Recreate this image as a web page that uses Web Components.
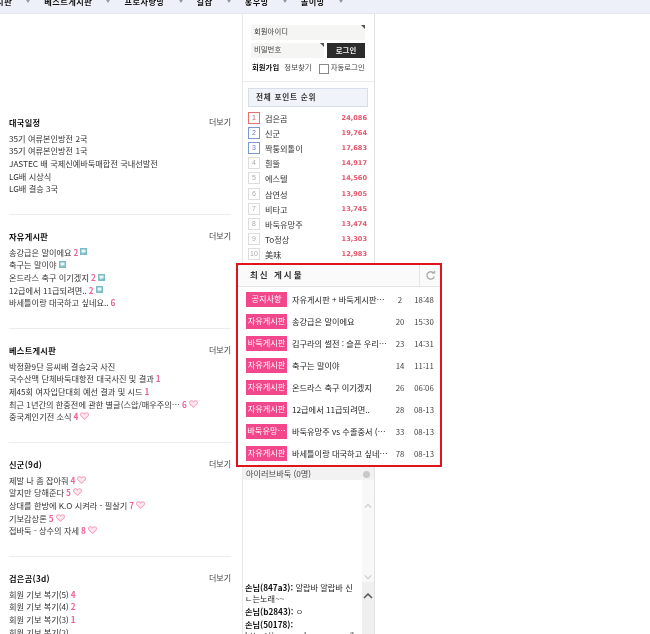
<!DOCTYPE html>
<html lang="ko">
<head>
<meta charset="utf-8">
<title>bbs</title>
<style>
  html, body { margin: 0; padding: 0; background: #fff; }
  body { width: 650px; height: 634px; overflow: hidden; position: relative; font: 8px "Noto Sans CJK KR", "Liberation Sans", sans-serif; color: #222; filter: blur(.25px); }
  .page { display: flex; }
</style>
</head>
<body>
<top-nav></top-nav>
<div class="page">
  <board-column></board-column>
  <side-column>
    <login-box></login-box>
    <rank-box></rank-box>
    <chat-box></chat-box>
  </side-column>
</div>
<latest-popup></latest-popup>

<script>
const FONT = '"Noto Sans CJK KR", "Liberation Sans", sans-serif';

class TopNav extends HTMLElement {
  constructor() {
    super();
    this.attachShadow({ mode: 'open' });
    const items = ['자유게시판', '베스트게시판', '프로사랑방', '길잡', '홍우방', '놀이방'];
    this.shadowRoot.innerHTML = `
      <style>
        :host { display: block; height: 13.5px; background: #edf0f8; border-bottom: 1px solid #e3e6ee; overflow: hidden; box-sizing: border-box; }
        nav { display: flex; margin-left: -28px; margin-top: -5px; }
        a { display: flex; align-items: center; font-size: 8.2px; line-height: 12px; font-weight: 700; color: #111; letter-spacing: .5px; white-space: nowrap; }
        i { display: block; width: 0; height: 0; border: 2px solid transparent; border-top: 3px solid #999; border-bottom: 0; margin: 0 14px; }
      </style>
      <nav>${items.map(i => `<a>${i}<i></i></a>`).join('')}</nav>`;
  }
}

class BoardSection extends HTMLElement {
  constructor() {
    super();
    this.attachShadow({ mode: 'open' });
    this.shadowRoot.innerHTML = `
      <style>
        :host { display: block; height: 114px; box-sizing: border-box; border-bottom: 1px solid #ececec; padding-top: 15px; }
        :host(:last-child) { border-bottom: 0; }
        header { display: flex; justify-content: space-between; align-items: center; height: 12px; margin-bottom: 4px; }
        b { font-size: 8.2px; font-weight: 700; color: #111; letter-spacing: .3px; }
        span { font-size: 8px; color: #444; }
      </style>
      <header><b>${this.getAttribute('title')}</b><span>더보기</span></header>
      <slot></slot>`;
  }
}

class BoardRow extends HTMLElement {
  constructor() {
    super();
    this.attachShadow({ mode: 'open' });
    const n = this.getAttribute('count');
    const icon = this.getAttribute('icon');
    let svg = '';
    if (icon === 'img') {
      svg = '<svg width="7" height="7" viewBox="0 0 7 7"><rect width="7" height="7" fill="#7cbcc4"/><rect x="1.5" y="1.5" width="4" height="3" fill="#e8f6f6"/><path d="M2.5 4.5v1.5l1.5-1.5z" fill="#e8f6f6"/></svg>';
    } else if (icon === 'heart') {
      svg = '<svg width="9" height="8" viewBox="0 0 8 7"><path d="M4 6.400 1 3.600C-.1 2.400.6.700 2.100.7c.9 0 1.500.5 1.900 1.100C4.400 1.200 5 .7 5.900.7c1.500 0 2.200 1.700 1.100 2.900z" fill="#fdeaf0" stroke="#f7a8c0" stroke-width=".9"/></svg>';
    }
    this.shadowRoot.innerHTML = `
      <style>
        :host { display: flex; align-items: center; gap: 2px; height: 12.67px; font-size: 8.2px; color: #333; white-space: nowrap; }
        em { font-style: normal; font-weight: 700; color: #f0609a; }
        svg { display: block; }
      </style>
      <slot></slot>${n ? `<em>${n}</em>` : ''}${svg}`;
  }
}

class BoardColumn extends HTMLElement {
  constructor() {
    super();
    this.attachShadow({ mode: 'open' });
    const boards = [
      ['대국일정', [['35기 여류본인방전 2국'], ['35기 여류본인방전 1국'], ['JASTEC 배 국제신예바둑매합전 국내선발전'], ['LG배 시상식'], ['LG배 결승 3국']]],
      ['자유게시판', [['송강급은 말이에요', 2, 'img'], ['축구는 말이야', '', 'img'], ['온드라스 축구 이기겠지', 2, 'img'], ['12급에서 11급되려면..', 2, 'img'], ['바세틀이랑 대국하고 싶네요..', 6]]],
      ['베스트게시판', [['박정환9단 응씨배 결승2국 사진'], ['국수산맥 단체바둑대항전 대국사진 및 결과', 1], ['제45회 여자입단대회 예선 결과 및 시드', 1], ['최근 1년간의 한중전에 관한 별글(스압/매우주의…', 6, 'heart'], ['중국계인기전 소식', 4, 'heart']]],
      ['신군(9d)', [['제발 나 좀 잡아줘', 4, 'heart'], ['알지만 당해준다', 5, 'heart'], ['상대를 한방에 K.O 시켜라 - 필살기', 7, 'heart'], ['기보감상론', 5, 'heart'], ['접바둑 - 상수의 자세', 8, 'heart']]],
      ['검은곰(3d)', [['회원 기보 복기(5)', 4], ['회원 기보 복기(4)', 2], ['회원 기보 복기(3)', 1], ['회원 기보 복기(2)']]]
    ];
    this.shadowRoot.innerHTML = `
      <style>
        :host { display: block; width: 222px; height: 620px; overflow: hidden; margin: 0 11px 0 9px; padding-top: 87px; box-sizing: border-box; flex: none; }
      </style>
      ${boards.map(b => `<board-section title="${b[0]}">${b[1].map(r =>
        `<board-row${r[1] ? ` count="${r[1]}"` : ''}${r[2] ? ` icon="${r[2]}"` : ''}>${r[0]}</board-row>`).join('')}</board-section>`).join('')}`;
  }
}

class SideColumn extends HTMLElement {
  constructor() {
    super();
    this.attachShadow({ mode: 'open' });
    this.shadowRoot.innerHTML = `
      <style>
        :host { display: block; width: 133px; height: 621px; flex: none; box-sizing: border-box; border-left: 1px solid #e8e8e8; border-right: 1px solid #e2e2e2; overflow: hidden; }
      </style>
      <slot></slot>`;
  }
}

class LoginBox extends HTMLElement {
  constructor() {
    super();
    this.attachShadow({ mode: 'open' });
    this.shadowRoot.innerHTML = `
      <style>
        :host { display: block; height: 68px; box-sizing: border-box; border-bottom: 1px solid #ececec; padding: 11px 9px 0 8px; font-size: 7.4px; color: #444; white-space: nowrap; }
        .field { position: relative; background: #f5f5f3; height: 15px; line-height: 12px; padding-left: 3px; box-sizing: border-box; }
        .field::after { content: ""; position: absolute; top: 0; right: 0; border: 2px solid transparent; border-top-color: #555; border-right-color: #555; }
        .row { display: flex; gap: 3px; margin-top: 3px; }
        .row .field { flex: 1; }
        button { width: 38px; height: 15px; padding: 0 0 2px; border: 0; background: #2c2c2c; color: #eee; font: 700 7.4px ${FONT}; }
        .links { display: flex; align-items: flex-start; margin-top: 5px; padding-left: 1px; line-height: 8px; }
        .links b { color: #111; width: 33px; }
        .links span { width: 35px; }
        .links i { width: 8px; height: 8px; flex: none; border: 1px solid #888; background: #fff; margin: 1px 2px 0 0; }
      </style>
      <div class="field">회원아이디</div>
      <div class="row"><div class="field">비밀번호</div><button>로그인</button></div>
      <div class="links"><b>회원가입</b><span>정보찾기</span><i></i><span>자동로그인</span></div>`;
  }
}

class RankBox extends HTMLElement {
  constructor() {
    super();
    this.attachShadow({ mode: 'open' });
    const rows = [['검은곰', '24,086'], ['신군', '19,764'], ['짝퉁외톨이', '17,683'], ['흰뚤', '14,917'], ['에스텔', '14,560'], ['삼연성', '13,905'], ['비타고', '13,745'], ['바둑유망주', '13,474'], ['To정상', '13,303'], ['美味', '12,983']];
    this.shadowRoot.innerHTML = `
      <style>
        :host { display: block; padding: 6px 6px 0 5px; height: 385px; box-sizing: border-box; }
        h3 { margin: 0 0 4px; height: 19px; line-height: 16px; box-sizing: border-box; border: 1px solid #d6deec; background: #f0f3fa; padding-left: 7px; font-size: 7.6px; font-weight: 700; color: #333; letter-spacing: .8px; }
        .r { display: flex; align-items: center; height: 15.1px; }
        .n { width: 12px; height: 12px; box-sizing: border-box; border: 1px solid #ddd; font: 7px/10px "Liberation Sans", sans-serif; color: #aaa; text-align: center; margin-right: 5px; }
        .n.a { border-color: #e87070; color: #c66; }
        .n.b { border-color: #7f97cf; color: #67c; }
        .t { flex: 1; font-size: 8.2px; color: #333; }
        .p { font: 700 6.6px "DejaVu Sans", sans-serif; color: #e4556c; margin-right: 1px; }
      </style>
      <h3>전체 포인트 순위</h3>
      ${rows.map((r, i) => `<div class="r"><span class="n ${i === 0 ? 'a' : i < 3 ? 'b' : ''}">${i + 1}</span><span class="t">${r[0]}</span><span class="p">${r[1]}</span></div>`).join('')}`;
  }
}

class ChatBox extends HTMLElement {
  constructor() {
    super();
    this.attachShadow({ mode: 'open' });
    const up = (c, w) => `<svg width="${w}" height="6" viewBox="0 0 10 6"><path d="M1 5 5 1l4 4" fill="none" stroke="${c}" stroke-width="1.500"/></svg>`;
    const down = (c, w) => `<svg width="${w}" height="6" viewBox="0 0 10 6"><path d="M1 1 5 5l4-4" fill="none" stroke="${c}" stroke-width="1.500"/></svg>`;
    this.shadowRoot.innerHTML = `
      <style>
        :host { display: block; font-size: 8.2px; color: #222; }
        header { position: relative; height: 13px; line-height: 12px; background: #f2f2f2; padding-left: 3px; color: #444; white-space: nowrap; }
        header i { position: absolute; right: 4px; top: 4px; width: 7px; height: 7px; border-radius: 50%; background: #c8c8c8; }
        .users, .msgs { display: flex; }
        .users { height: 102px; }
        .msgs { height: 52px; overflow: hidden; }
        .body { flex: 1; min-width: 0; padding: 0 8px 0 2px; line-height: 11px; }
        .body div { margin-bottom: 2px; }
        .body b { color: #111; }
        .url { white-space: nowrap; }
        .bar { width: 12px; flex: none; background: #f8f8f8; display: flex; flex-direction: column; align-items: center; justify-content: space-between; padding: 23px 0 2px; box-sizing: border-box; }
        .msgs .bar { background: #efefef; justify-content: flex-start; padding-top: 11px; }
      </style>
      <header>아이러브바둑 (0명)<i></i></header>
      <div class="users"><div class="body"></div><div class="bar">${up('#ccc', 8)}${down('#ccc', 8)}</div></div>
      <div class="msgs">
        <div class="body">
          <div><b>손님(847a3):</b> 알랍바 알랍바 신<br>ㄴ는노래~~</div>
          <div><b>손님(b2843):</b> ㅇ</div>
          <div><b>손님(50178):</b><br><span class="url">https://www.cyberoro.com/bcu</span></div>
        </div>
        <div class="bar">${up('#555', 10)}</div>
      </div>`;
  }
}

class LatestPopup extends HTMLElement {
  constructor() {
    super();
    this.attachShadow({ mode: 'open' });
    const rows = [
      ['공지사항', '자유게시판 + 바둑게시판…', 2, '18:48'],
      ['자유게시판', '송강급은 말이에요', 20, '15:30'],
      ['바둑게시판', '김구라의 썰전 : 슬픈 우리…', 23, '14:31'],
      ['자유게시판', '축구는 말이야', 14, '11:11'],
      ['자유게시판', '온드라스 축구 이기겠지', 26, '06:06'],
      ['자유게시판', '12급에서 11급되려면..', 28, '08-13'],
      ['바둑유망…', '바둑유망주 vs 수졸중서 (…', 33, '08-13'],
      ['자유게시판', '바세틀이랑 대국하고 싶네…', 78, '08-13']
    ];
    this.shadowRoot.innerHTML = `
      <style>
        :host { position: absolute; left: 236px; top: 263px; width: 206px; height: 204px; box-sizing: border-box; border: 2.500px solid #e0141c; background: rgba(255,255,255,.94); }
        header { display: flex; height: 21px; border-bottom: 1px solid #e4e4e4; background: #fafafa; }
        h2 { flex: 1; margin: 0; padding-left: 12px; font-size: 8.500px; line-height: 18px; font-weight: 700; color: #333; letter-spacing: 2px; }
        .re { width: 20px; border-left: 1px solid #e4e4e4; display: flex; align-items: center; justify-content: center; }
        ul { list-style: none; margin: 0; padding: 1px 0 0 8px; }
        li { display: flex; align-items: center; height: 22px; font-size: 8.200px; color: #222; white-space: nowrap; }
        .tag { width: 41px; height: 15px; line-height: 13px; background: #f3478c; color: #fff; text-align: center; margin-right: 5px; flex: none; overflow: hidden; }
        .s { width: 96px; overflow: hidden; flex: none; }
        .c { width: 24px; text-align: center; color: #444; flex: none; font-size: 7.800px; }
        .d { width: 24px; text-align: center; color: #444; flex: none; font-size: 7.800px; }
      </style>
      <header><h2>최신 게시물</h2><div class="re"><svg width="11" height="11" viewBox="0 0 11 11"><path d="M8.600 3.200A3.700 3.700 0 1 0 9.200 6.500" fill="none" stroke="#aaa" stroke-width="1.300"/><path d="M6.600 3.400h3.600V.300z" fill="#aaa"/></svg></div></header>
      <ul>${rows.map(r => `<li><span class="tag">${r[0]}</span><span class="s">${r[1]}</span><span class="c">${r[2]}</span><span class="d">${r[3]}</span></li>`).join('')}</ul>`;
  }
}

customElements.define('top-nav', TopNav);
customElements.define('board-section', BoardSection);
customElements.define('board-row', BoardRow);
customElements.define('board-column', BoardColumn);
customElements.define('side-column', SideColumn);
customElements.define('login-box', LoginBox);
customElements.define('rank-box', RankBox);
customElements.define('chat-box', ChatBox);
customElements.define('latest-popup', LatestPopup);
</script>
</body>
</html>
